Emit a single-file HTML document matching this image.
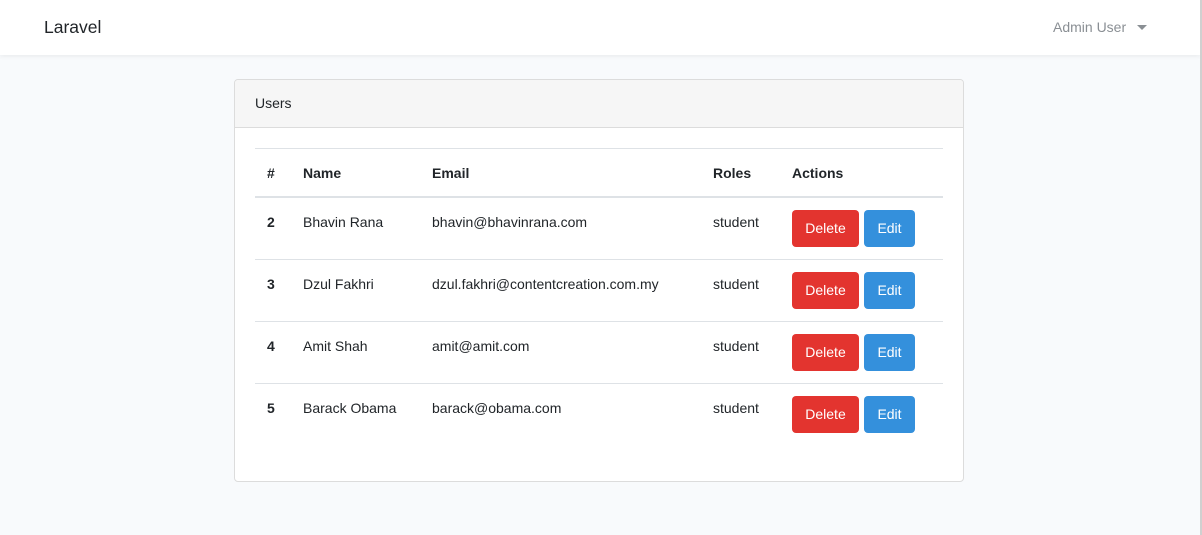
<!DOCTYPE html>
<html><head><meta charset="utf-8"><style>
*{margin:0;padding:0;box-sizing:border-box}
body{width:1202px;height:535px;background:#f8fafc;font-family:"Liberation Sans",sans-serif;font-size:14px;color:#212529;position:relative;overflow:hidden}
.nav{position:absolute;left:0;top:0;width:1200px;height:55px;background:#fff;box-shadow:0 2px 4px rgba(0,0,0,.05)}
.brand{position:absolute;left:44px;top:17px;font-size:17.5px;color:#212529}
.user{position:absolute;left:1053px;top:19px;font-size:14px;color:#8a8f94}
.caret{position:absolute;left:1137px;top:25px;border-left:5px solid transparent;border-right:5px solid transparent;border-top:5px solid #8a8f94}
.rb{position:absolute;left:1200px;top:0;width:2px;height:535px;background:#d0d0d0}
.card{position:absolute;left:234px;top:79px;width:730px;height:403px;background:#fff;border:1px solid #dcdcdc;border-radius:4px;overflow:hidden}
.ch{height:48px;background:#f6f6f6;border-bottom:1px solid #dcdcdc;padding:15px 20px;font-size:14px}
.t{position:absolute;font-size:14px}
.b{font-weight:bold}
.hl{position:absolute;left:20px;width:688px;height:1px;background:#dee2e6}
.btn{position:absolute;height:37px;border-radius:4px;color:#fff;font-size:14px;text-align:center;line-height:37px}
.del{background:#e3342f;width:67px}
.ed{background:#3490dc;width:51px}
</style></head><body>
<div class="nav"><div class="brand">Laravel</div><div class="user">Admin User</div><div class="caret"></div></div>
<div class="rb"></div>
<div class="card">
<div class="ch">Users</div>
<div class="hl" style="top:68px"></div>
<div class="t b" style="left:32px;top:85px">#</div>
<div class="t b" style="left:68px;top:85px">Name</div>
<div class="t b" style="left:197px;top:85px">Email</div>
<div class="t b" style="left:478px;top:85px">Roles</div>
<div class="t b" style="left:557px;top:85px">Actions</div>
<div class="hl" style="top:116px;height:2px"></div>

<div class="t b" style="left:32px;top:134px">2</div>
<div class="t" style="left:68px;top:134px">Bhavin Rana</div>
<div class="t" style="left:197px;top:134px">bhavin@bhavinrana.com</div>
<div class="t" style="left:478px;top:134px">student</div>
<div class="btn del" style="left:557px;top:130px">Delete</div>
<div class="btn ed" style="left:629px;top:130px">Edit</div>
<div class="hl" style="top:179px"></div>

<div class="t b" style="left:32px;top:196px">3</div>
<div class="t" style="left:68px;top:196px">Dzul Fakhri</div>
<div class="t" style="left:197px;top:196px">dzul.fakhri@contentcreation.com.my</div>
<div class="t" style="left:478px;top:196px">student</div>
<div class="btn del" style="left:557px;top:192px">Delete</div>
<div class="btn ed" style="left:629px;top:192px">Edit</div>
<div class="hl" style="top:241px"></div>

<div class="t b" style="left:32px;top:258px">4</div>
<div class="t" style="left:68px;top:258px">Amit Shah</div>
<div class="t" style="left:197px;top:258px">amit@amit.com</div>
<div class="t" style="left:478px;top:258px">student</div>
<div class="btn del" style="left:557px;top:254px">Delete</div>
<div class="btn ed" style="left:629px;top:254px">Edit</div>
<div class="hl" style="top:303px"></div>

<div class="t b" style="left:32px;top:320px">5</div>
<div class="t" style="left:68px;top:320px">Barack Obama</div>
<div class="t" style="left:197px;top:320px">barack@obama.com</div>
<div class="t" style="left:478px;top:320px">student</div>
<div class="btn del" style="left:557px;top:316px">Delete</div>
<div class="btn ed" style="left:629px;top:316px">Edit</div>
</div>
</body></html>
